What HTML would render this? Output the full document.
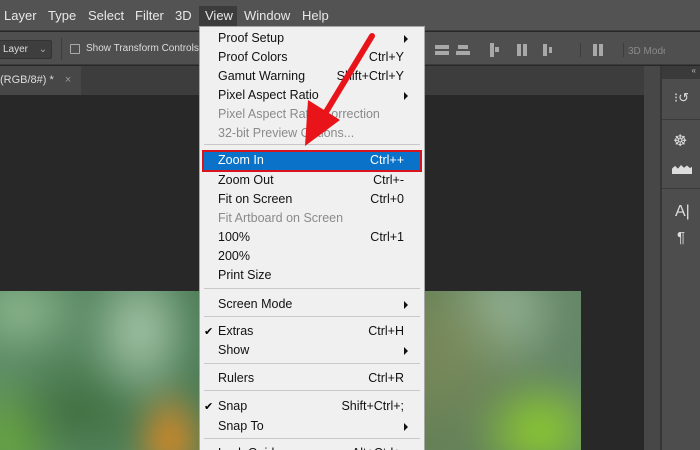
<!DOCTYPE html>
<html style="overflow:hidden;width:700px;height:450px"><head><style>
*{margin:0;padding:0;box-sizing:border-box}
body{width:700px;height:450px;overflow:hidden;background:#282828;font-family:"Liberation Sans",sans-serif;position:relative}
.abs{position:absolute}
.mb{left:0;top:0;width:700px;height:31px;background:#535353;border-bottom:1px solid #3a3a3a}
.mb span{position:absolute;top:8px;font-size:13px;color:#e8e8e8}
.ob{left:0;top:32px;width:700px;height:33px;background:#4f4f4f;border-bottom:1px solid #3a3a3a}
.menu{left:199px;top:26px;width:226px;height:424px;background:#f0f0f0;border:1px solid #a8a8a8;border-bottom:none;overflow:hidden}
.it{position:absolute;left:18px;font-size:12.5px;color:#111;height:19px;line-height:19px;width:200px}
.it.d{color:#8a8a8a}
.it b{position:absolute;right:14px;font-weight:normal}
.ar{position:absolute;right:10px;top:6px;width:0;height:0;border-top:4px solid transparent;border-bottom:4px solid transparent;border-left:4px solid #111}
.sep{position:absolute;left:4px;width:216px;height:1px;background:#c8c8c8}
.ck{position:absolute;left:4px;font-size:11px}
</style></head><body>
<div class="abs mb">
<span style="left:4px">Layer</span><span style="left:48px">Type</span><span style="left:88px">Select</span><span style="left:135px">Filter</span><span style="left:175px">3D</span>
<div class="abs" style="left:199px;top:6px;width:38px;height:25px;background:#3c3c3c"></div>
<span style="left:205px">View</span><span style="left:244px">Window</span><span style="left:302px">Help</span>
</div>
<div class="abs ob">
<div class="abs" style="left:-4px;top:8px;width:56px;height:19px;background:#3e3e3e;border:1px solid #333;border-radius:2px;color:#ddd;font-size:10px;line-height:17px;padding-left:6px">Layer <span style="margin-left:8px;color:#aaa">⌄</span></div>
<div class="abs" style="left:61px;top:6px;width:1px;height:22px;background:#3d3d3d"></div>
<div class="abs" style="left:70px;top:12px;width:10px;height:10px;border:1px solid #aaa;border-radius:1px"></div>
<div class="abs" style="left:86px;top:11px;color:#ddd;font-size:10px">Show Transform Controls</div>
<div class="abs" style="left:435px;top:11px;width:230px;height:14px;color:#999">
<svg width="230" height="14"><g fill="#a8a8a8"><rect x="0" y="2" width="14" height="4"/><rect x="0" y="8" width="14" height="4"/><rect x="23" y="2" width="10" height="4"/><rect x="21" y="8" width="14" height="4"/><rect x="55" y="0" width="4" height="14"/><rect x="60" y="4" width="4" height="5"/><rect x="82" y="1" width="4" height="12"/><rect x="88" y="1" width="4" height="12"/><rect x="108" y="1" width="4" height="12"/><rect x="114" y="4" width="3" height="6"/><rect x="158" y="1" width="4" height="12"/><rect x="164" y="1" width="4" height="12"/></g><rect x="145" y="-4" width="1" height="22" fill="#3d3d3d"/><rect x="188" y="-4" width="1" height="22" fill="#3d3d3d"/><text x="193" y="11" font-size="10" fill="#8a8a8a" font-family="Liberation Sans">3D Mode:</text></svg>
</div>
</div>
<div class="abs" style="left:0;top:66px;width:644px;height:29px;background:#3d3d3d"></div>
<div class="abs" style="left:0;top:66px;width:81px;height:29px;background:#474747;color:#ddd;font-size:11px;line-height:29px">(RGB/8#) * <span style="margin-left:8px;color:#999">×</span></div>
<div class="abs" style="left:644px;top:66px;width:17px;height:384px;background:#474747"></div>
<div class="abs" style="left:660px;top:66px;width:2px;height:384px;background:#363636"></div>
<div class="abs" style="left:662px;top:66px;width:38px;height:384px;background:#4d4d4d"></div>
<div class="abs" style="left:662px;top:66px;width:38px;height:13px;background:#3a3a3a;color:#bbb;font-size:8px;text-align:right;padding-right:4px">«</div>
<div class="abs" style="left:662px;top:119px;width:38px;height:1px;background:#3a3a3a"></div>
<div class="abs" style="left:662px;top:188px;width:38px;height:1px;background:#3a3a3a"></div>
<div class="abs" style="left:674px;top:90px;color:#ddd;font-size:13px">⁝↺</div>
<div class="abs" style="left:673px;top:131px;color:#ddd;font-size:16px">☸</div>
<div class="abs" style="left:672px;top:165px;width:20px;height:9px;background:#ddd;clip-path:polygon(0 100%,0 40%,15% 10%,30% 40%,45% 0,60% 30%,75% 5%,90% 35%,100% 20%,100% 100%)"></div>
<div class="abs" style="left:675px;top:203px;color:#ddd;font-size:16px">A|</div>
<div class="abs" style="left:677px;top:229px;color:#ddd;font-size:15px">¶</div>
<div class="abs" style="left:0;top:291px;width:581px;height:159px;overflow:hidden;background:#5a8a66">
<div style="position:absolute;inset:-20px;filter:blur(14px);background:
radial-gradient(ellipse 70px 50px at 40px 40px,#8fb890,transparent),
radial-gradient(ellipse 60px 80px at 160px 60px,#a8c8ac,transparent),
radial-gradient(ellipse 80px 60px at 100px 140px,#3f6f3f,transparent),
radial-gradient(ellipse 40px 60px at 190px 170px,#f08a1c,transparent),
radial-gradient(ellipse 60px 70px at 30px 170px,#6aa83a,transparent),
radial-gradient(ellipse 90px 90px at 460px 80px,#7a8a5a,transparent),
radial-gradient(ellipse 70px 60px at 560px 160px,#8ed02a,transparent),
radial-gradient(ellipse 70px 70px at 520px 40px,#98b89c,transparent),
linear-gradient(90deg,#5f8e68,#4a7a54 40%,#667f54 70%,#64886a)"></div>
</div>
<div class="abs menu">
<div class="it" style="top:2px">Proof Setup<i class="ar"></i></div>
<div class="it" style="top:21px">Proof Colors<b>Ctrl+Y</b></div>
<div class="it" style="top:40px">Gamut Warning<b>Shift+Ctrl+Y</b></div>
<div class="it" style="top:59px">Pixel Aspect Ratio<i class="ar"></i></div>
<div class="it d" style="top:78px">Pixel Aspect Ratio Correction</div>
<div class="it d" style="top:97px">32-bit Preview Options...</div>
<div class="sep" style="top:117px"></div>
<div class="abs" style="left:2px;top:123px;width:220px;height:22px;background:#0a72c8;border:2px solid #d8141c"></div>
<div class="it" style="top:124px;color:#fff">Zoom In<b>Ctrl++</b></div>
<div class="it" style="top:144px">Zoom Out<b>Ctrl+-</b></div>
<div class="it" style="top:163px">Fit on Screen<b>Ctrl+0</b></div>
<div class="it d" style="top:182px">Fit Artboard on Screen</div>
<div class="it" style="top:201px">100%<b>Ctrl+1</b></div>
<div class="it" style="top:220px">200%</div>
<div class="it" style="top:239px">Print Size</div>
<div class="sep" style="top:261px"></div>
<div class="it" style="top:268px">Screen Mode<i class="ar"></i></div>
<div class="sep" style="top:289px"></div>
<span class="ck" style="top:298px">✔</span>
<div class="it" style="top:295px">Extras<b>Ctrl+H</b></div>
<div class="it" style="top:314px">Show<i class="ar"></i></div>
<div class="sep" style="top:336px"></div>
<div class="it" style="top:342px">Rulers<b>Ctrl+R</b></div>
<div class="sep" style="top:363px"></div>
<span class="ck" style="top:373px">✔</span>
<div class="it" style="top:370px">Snap<b>Shift+Ctrl+;</b></div>
<div class="it" style="top:390px">Snap To<i class="ar"></i></div>
<div class="sep" style="top:411px"></div>
<div class="it" style="top:417px">Lock Guides<b>Alt+Ctrl+;</b></div>
</div>
<svg class="abs" style="left:0;top:0" width="700" height="450"><line x1="372" y1="36" x2="326" y2="112" stroke="#e8141a" stroke-width="6" stroke-linecap="round"/><polygon points="305,146 308,100 340,120" fill="#e8141a"/></svg>
</body></html>
